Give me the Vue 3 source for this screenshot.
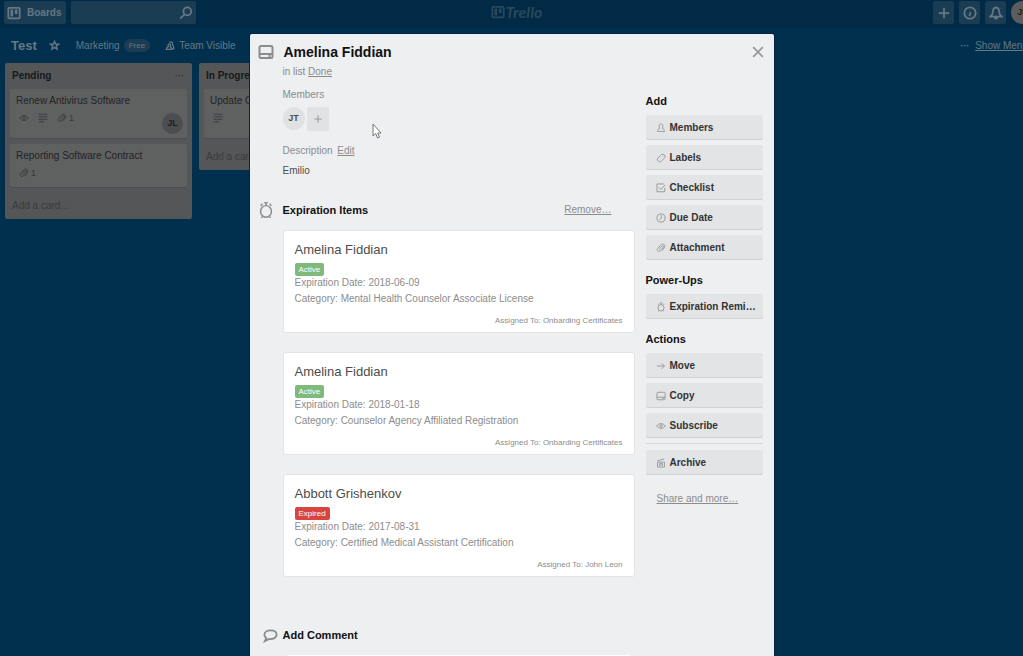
<script setup>
const addButtons = [
  { icon: 'member', label: 'Members' },
  { icon: 'label', label: 'Labels' },
  { icon: 'check', label: 'Checklist' },
  { icon: 'clock', label: 'Due Date' },
  { icon: 'clip', label: 'Attachment' }
]
const actionButtons = [
  { icon: 'arrow', label: 'Move' },
  { icon: 'card', label: 'Copy' },
  { icon: 'eye', label: 'Subscribe' }
]
const groups = [
  { title: 'Add', buttons: addButtons },
  { title: 'Power-Ups', buttons: [{ icon: 'alarm', label: 'Expiration Remi…' }] },
  { title: 'Actions', buttons: actionButtons }
]
const items = [
  { name: 'Amelina Fiddian', status: 'Active', date: '2018-06-09', category: 'Mental Health Counselor Associate License', to: 'Onbarding Certificates' },
  { name: 'Amelina Fiddian', status: 'Active', date: '2018-01-18', category: 'Counselor Agency Affiliated Registration', to: 'Onbarding Certificates' },
  { name: 'Abbott Grishenkov', status: 'Expired', date: '2017-08-31', category: 'Certified Medical Assistant Certification', to: 'John Leon' }
]
</script>

<template>
  <div class="app">
    <svg class="defs" aria-hidden="true">
      <symbol id="member" viewBox="0 0 16 16"><path d="M8 1.500C6 1.500 4.800 2.900 4.800 4.900c0 1.500.6 2.700 1.400 3.300C4 9 2.500 10.500 2.500 13.500h11c0-3-1.500-4.500-3.700-5.300.8-.6 1.400-1.800 1.400-3.300C11.200 2.900 10 1.500 8 1.500z" /></symbol>
      <symbol id="label" viewBox="0 0 16 16"><path d="M2 9.500 8.500 2.500q3-1.500 5 .5t.500 4.500L7.500 14q-2.500.5-4-1T2 9.500z" stroke-linejoin="round" /><path d="M10.800 5.500h.8" /></symbol>
      <symbol id="check" viewBox="0 0 16 16"><path d="M14 8v6H1.500V1.500h11M4.500 7l3.500 3.500L14.500 3" /></symbol>
      <symbol id="clock" viewBox="0 0 16 16"><circle cx="8" cy="8" r="6.500" /><path d="M8.500 3.500V8l-3 3" /></symbol>
      <symbol id="clip" viewBox="0 0 16 16"><path d="m5 10 4.500-5c1.500-1.500 3.500.3 2.200 1.900L6.500 12.600c-2.500 2.400-6-.5-4-3.500L7.500 3c3.500-3.500 8.500.5 5.500 4.800L9 13" /></symbol>
      <symbol id="arrow" viewBox="0 0 16 16"><path d="M1.500 8h12M9 3.500 13.500 8 9 12.500" /></symbol>
      <symbol id="card" viewBox="0 0 16 16"><rect x="1.500" y="2" width="13" height="12" rx="1.500" /><path d="M1.500 10h13M10.500 12h2" /></symbol>
      <symbol id="eye" viewBox="0 0 16 16"><path d="M1 8c3.500-5 10.500-5 14 0-3.500 5-10.500 5-14 0z" /><circle cx="8" cy="8" r="2" /></symbol>
      <symbol id="archive" viewBox="0 0 16 16"><path d="M2.500 6.500h11v8h-11zM2 4.500l11-3M5.500 9h5v2.500h-5z" /></symbol>
      <symbol id="alarm" viewBox="0 0 16 16"><ellipse cx="8" cy="9.300" rx="4.800" ry="5.200" /><path d="M3.300 4.300 4.800 2.500M12.700 4.300l-1.500-1.800M8 1.500V4M6.500 1.500h3M5 13.700l-1 1.300M11 13.700l1 1.300" /></symbol>
      <symbol id="lines" viewBox="0 0 16 16"><path d="M1 2h14M1 6h14M1 10h14M1 14h9" /></symbol>
      <symbol id="plus" viewBox="0 0 16 16"><path d="M8 2v12M2 8h12" /></symbol>
      <symbol id="info" viewBox="0 0 16 16"><circle cx="8" cy="8" r="6.500" /><path d="m8.500 7-1 4.500M9 4.300v.4" /></symbol>
      <symbol id="bell" viewBox="0 0 16 16"><path d="M8 1.500c-2.500.5-3.500 2-3.500 4.500 0 3-1 4.500-3 6h13c-2-1.500-3-3-3-6 0-2.500-1-4-3.500-4.500zM6.500 12.500c0 2.500 3 2.500 3 0" /></symbol>
      <symbol id="search" viewBox="0 0 16 16"><circle cx="9.500" cy="6.200" r="4.500" /><path d="m6.300 9.500-5 5" /></symbol>
      <symbol id="star" viewBox="0 0 16 16"><path d="m8 2 1.700 4h4.300l-3.400 2.800 1.200 4.500L8 10.700l-3.800 2.600 1.200-4.500L2 6h4.300z" /></symbol>
      <symbol id="team" viewBox="0 0 16 16"><path d="M7 2.500c3-2.500 6.500 0 5 4 1.500 1.500 2.200 3.500 2 6H11M7.500 4.500c-2.500 0-3.200 2.300-2 4.500C3 10 2 11.500 2 13.500h8.500c0-2-.5-3.500-2-4.500 1-2 .5-4-1-4.500z" /></symbol>
      <symbol id="bubble" viewBox="0 0 16 16"><path d="M8.500 2.500C4.500 2.500 1.500 4.500 1.500 7.200c0 1.500.8 2.700 2 3.500L2 14l4.500-2.300c4.500.7 8-1.500 8-4.500 0-2.700-2.500-4.700-6-4.700z" /></symbol>
      <symbol id="close" viewBox="0 0 16 16"><path d="m2.500 2.500 11 11M13.500 2.500l-11 11" /></symbol>
      <symbol id="board" viewBox="0 0 16 16"><rect x="1.500" y="2" width="13" height="12" rx="1" /><path d="M5.500 4v8M10.500 4v5" stroke-width="3" /></symbol>
    </svg>

    <header class="topbar">
      <button class="boards"><svg class="i14 bold"><use href="#board" /></svg>Boards</button>
      <label class="search">
        <input type="text" aria-label="Search" />
        <svg class="i14 bold"><use href="#search" /></svg>
      </label>
      <a href="#" class="logo"><svg class="i14 bold"><use href="#board" /></svg>Trello</a>
      <nav class="tools">
        <button aria-label="Create"><svg class="i14 bold"><use href="#plus" /></svg></button>
        <button aria-label="Information"><svg class="i14 bold"><use href="#info" /></svg></button>
        <button aria-label="Notifications"><svg class="i14 bold"><use href="#bell" /></svg></button>
        <span class="me">JL</span>
      </nav>
    </header>

    <div class="boardbar">
      <h1>Test</h1>
      <button class="star" aria-label="Star board"><svg class="i11 bold"><use href="#star" /></svg></button>
      <a href="#" class="team">Marketing <span class="free">Free</span></a>
      <a href="#" class="visible"><svg class="i10 bold"><use href="#team" /></svg>Team Visible</a>
      <div class="menu"><span class="dots">···</span><a href="#">Show Menu</a></div>
    </div>

    <div class="lists">
      <section class="list">
        <h2>Pending<button class="more dots" aria-label="List actions">···</button></h2>
        <article class="tile">
          <p>Renew Antivirus Software</p>
          <div class="meta">
            <svg class="i10"><use href="#eye" /></svg>
            <svg class="i10"><use href="#lines" /></svg>
            <span><svg class="i10"><use href="#clip" /></svg>1</span>
            <b class="who">JL</b>
          </div>
        </article>
        <article class="tile">
          <p>Reporting Software Contract</p>
          <div class="meta short"><span><svg class="i10"><use href="#clip" /></svg>1</span></div>
        </article>
        <a href="#" class="addcard">Add a card…</a>
      </section>
      <section class="list">
        <h2>In Progress</h2>
        <article class="tile">
          <p>Update C</p>
          <div class="meta"><svg class="i10"><use href="#lines" /></svg></div>
        </article>
        <a href="#" class="addcard">Add a card…</a>
      </section>
    </div>

    <div class="overlay">
      <div class="modal" role="dialog" aria-label="Amelina Fiddian">
        <div class="title">
          <svg class="i16 bold"><use href="#card" /></svg>
          <h2>Amelina Fiddian</h2>
          <button class="close" aria-label="Close"><svg class="i14"><use href="#close" /></svg></button>
        </div>
        <div class="columns">
          <main>
            <p class="inlist">in list <a href="#">Done</a></p>
            <h4>Members</h4>
            <div class="members">
              <span class="avatar">JT</span>
              <button aria-label="Add member"><svg class="i10"><use href="#plus" /></svg></button>
            </div>
            <h4 class="desc">Description <a href="#">Edit</a></h4>
            <p class="text">Emilio</p>
            <div class="sectionhead">
              <svg class="i18"><use href="#alarm" /></svg>
              <h3>Expiration Items</h3>
              <a href="#">Remove…</a>
            </div>
            <div class="items">
              <article v-for="(it, n) in items" :key="n" class="item">
                <h5>{{ it.name }}</h5>
                <span class="badge" :class="it.status.toLowerCase()">{{ it.status }}</span>
                <p>Expiration Date: {{ it.date }}</p>
                <p>Category: {{ it.category }}</p>
                <small>Assigned To: {{ it.to }}</small>
              </article>
            </div>
            <div class="sectionhead comment">
              <svg class="i16 bold"><use href="#bubble" /></svg>
              <h3><label for="comment">Add Comment</label></h3>
            </div>
            <textarea id="comment" rows="3"></textarea>
          </main>
          <aside>
            <section v-for="g in groups" :key="g.title" class="group">
              <h3>{{ g.title }}</h3>
              <button v-for="b in g.buttons" :key="b.label" class="side">
                <svg class="i10"><use :href="'#' + b.icon" /></svg><span>{{ b.label }}</span>
              </button>
            </section>
            <hr />
            <button class="side"><svg class="i10"><use href="#archive" /></svg><span>Archive</span></button>
            <a href="#" class="share">Share and more…</a>
          </aside>
        </div>
        <svg class="cursor" viewBox="0 0 10 16"><path d="M1 1v12l2.700-2.500L5.500 15l2-.8L5.700 10H9z" /></svg>
      </div>
    </div>
  </div>
</template>

<style>
body { margin: 0; background: #00304e; }
</style>

<style scoped>
* { box-sizing: border-box; }
.app {
  position: relative;
  height: 100vh;
  overflow: hidden;
  background: #00304e;
  font: 10px/16px "Liberation Sans", Arial, sans-serif;
  color: #5b6a73;
}
h1, h2, h3, h4, h5, p { margin: 0; }
button { font: inherit; color: inherit; border: 0; padding: 0; background: none; }
a { color: inherit; text-decoration: none; }
.defs { position: absolute; width: 0; height: 0; }
svg { fill: none; stroke: currentColor; stroke-width: 1.3; flex: none; }
.bold { stroke-width: 2; }
.i10 { width: 10px; height: 10px; }
.i11 { width: 11px; height: 11px; }
.i14 { width: 14px; height: 14px; }
.i16 { width: 16px; height: 16px; }
.i18 { width: 18px; height: 18px; }
.dots { font-weight: bold; font-size: 9px; }

.topbar { position: relative; display: flex; align-items: center; height: 28px; padding: 0 0 3px 4px; background: #002a45; color: #667884; }
.boards { display: flex; align-items: center; gap: 6px; height: 23px; width: 62px; padding-left: 3px; background: #1b3d54; border-radius: 2px; font-weight: bold; }
.search { display: flex; align-items: center; width: 125px; height: 23px; margin-left: 5px; padding-right: 3px; background: #1b3d54; border-radius: 2px; }
.search input { flex: 1; min-width: 0; border: 0; background: none; color: inherit; outline: 0; }
.logo { position: absolute; left: 50%; top: 4px; margin-left: -21px; display: flex; align-items: center; gap: 1px; font: italic bold 16px/16px Lato, sans-serif; color: #29485c; }
.tools { display: flex; gap: 5px; margin: 0 -11px 0 auto; }
.tools button { display: flex; align-items: center; justify-content: center; width: 21px; height: 23px; background: #1b3d54; border-radius: 2px; }
.me { width: 23px; height: 23px; border-radius: 50%; background: #5c5d5e; color: #1c1e20; font-size: 9px; font-weight: bold; line-height: 23px; text-align: center; }

.boardbar { display: flex; align-items: center; height: 35px; padding-left: 11px; color: #667884; }
.boardbar h1 { font-size: 13px; line-height: 16px; }
.star { display: flex; margin-left: 12px; }
.team { display: flex; align-items: center; gap: 4px; margin-left: 16px; }
.free { padding: 0 5px; border-radius: 7px; background: #1b3d54; font-size: 8px; line-height: 13px; }
.visible { display: flex; align-items: center; gap: 4px; margin-left: 15px; }
.menu { display: flex; gap: 6px; margin: 0 -5px 0 auto; }
.menu a { text-decoration: underline; }

.lists { display: flex; align-items: flex-start; gap: 7px; padding-left: 5px; }
.list { width: 187px; padding: 5px; background: #545657; border-radius: 2px; color: #222426; }
.list h2 { display: flex; justify-content: space-between; height: 21px; padding: 0 3px 0 2px; font-size: 10px; line-height: 16px; color: #17191a; }
.more { line-height: 16px; height: 16px; color: #35393b; }
.tile { margin-bottom: 6px; padding: 4px 6px 6px; background: #5f6060; border-radius: 2px; box-shadow: 0 1px 0 #4a4c4d; }
.tile p { line-height: 15px; }
.meta { display: flex; align-items: flex-start; gap: 9px; height: 24px; padding: 5px 0 0 3px; color: #34383b; }
.meta.short { height: 18px; }
.meta span { display: flex; gap: 2px; font-size: 9px; line-height: 10px; }
.who { width: 21px; height: 21px; margin: 0 -2px 0 auto; border-radius: 50%; background: #4b4f52; color: #1c1e20; line-height: 21px; text-align: center; font-size: 9px; }
.addcard { display: block; padding: 5px 2px 0; line-height: 16px; color: #383c3f; }

.overlay { position: absolute; inset: 0; padding-top: 34px; }
.modal { position: relative; max-width: 524px; height: 100%; min-height: 720px; margin: 0 auto; padding: 9px 11px 0 8px; background: #edeff0; border-radius: 2px 2px 0 0; color: #8c8c8c; box-shadow: 0 0 0 1px #00264a; }
.title { display: flex; align-items: center; height: 18px; }
.title h2 { margin-left: 10px; font-size: 14px; line-height: 18px; color: #111; }
.close { display: flex; margin: 0 -2px 0 auto; color: #999; }
.close svg { stroke-width: 2; }
.columns { display: grid; grid-template-columns: minmax(0, 1fr) 117px; gap: 11px; padding-left: 25px; }
main a { text-decoration: underline; }
.inlist { margin-top: 3px; }
h4 { margin-top: 7px; font-size: 10px; font-weight: normal; line-height: 16px; }
.members { display: flex; gap: 2px; margin-top: 4px; }
.avatar { width: 22px; height: 23px; border-radius: 50%; background: #dfe1e2; color: #4d4d4d; font-weight: bold; font-size: 9px; line-height: 23px; text-align: center; }
.members button { display: flex; align-items: center; justify-content: center; width: 22px; height: 24px; background: #e0e2e3; border-radius: 2px; color: #8c8c8c; }
h4.desc { margin-top: 12px; }
.desc a { margin-left: 2px; }
.text { margin-top: 4px; color: #4d4d4d; }
.sectionhead { display: flex; align-items: center; height: 20px; margin: 21px 23px 10px -26px; }
.sectionhead h3 { flex: 1; margin-left: 8px; }
h3 { font-size: 11px; line-height: 18px; color: #111; }
.items { display: flex; flex-direction: column; gap: 19px; }
.item { display: flex; flex-direction: column; align-items: flex-start; padding: 10px 11px 5px; background: #fff; border: 1px solid #e2e4e6; border-radius: 3px; }
.item h5 { font-size: 13px; font-weight: normal; line-height: 18px; color: #4d4d4d; }
.badge { margin: 4px 0 -1px; padding: 0 4px; border-radius: 2px; font-size: 8px; line-height: 13px; color: #fff; }
.active { background: #7fba7a; }
.expired { background: #d9443f; }
.item small { align-self: flex-end; margin-top: 8px; font-size: 8px; line-height: 12px; }
.comment { margin: 48px 0 10px -20px; }
.comment .i16 { width: 15px; height: 15px; }
.comment h3 { margin-left: 5px; }
textarea { display: block; width: calc(100% - 8px); margin-left: 4px; border: 0; border-radius: 2px; background: #fff; resize: none; }

aside { padding-top: 31px; }
.group { display: flex; flex-direction: column; gap: 5px; margin-bottom: 11px; }
.side { display: flex; align-items: center; gap: 4px; width: 100%; height: 25px; padding: 0 8px 0 10px; background: #e2e4e6; border-radius: 2px; box-shadow: inset 0 -1px 0 #cfd2d4; font-weight: bold; color: #8c8c8c; text-align: left; }
.side span { white-space: nowrap; color: #333; }
hr { height: 1px; margin: -6px 0 6px; border: 0; background: #d6dadc; }
.share { display: block; margin: 16px 0 0 11px; text-decoration: underline; }
.cursor { position: absolute; left: 122px; top: 89px; width: 10px; height: 16px; fill: #fff; stroke: #777; stroke-width: 1; }
</style>
